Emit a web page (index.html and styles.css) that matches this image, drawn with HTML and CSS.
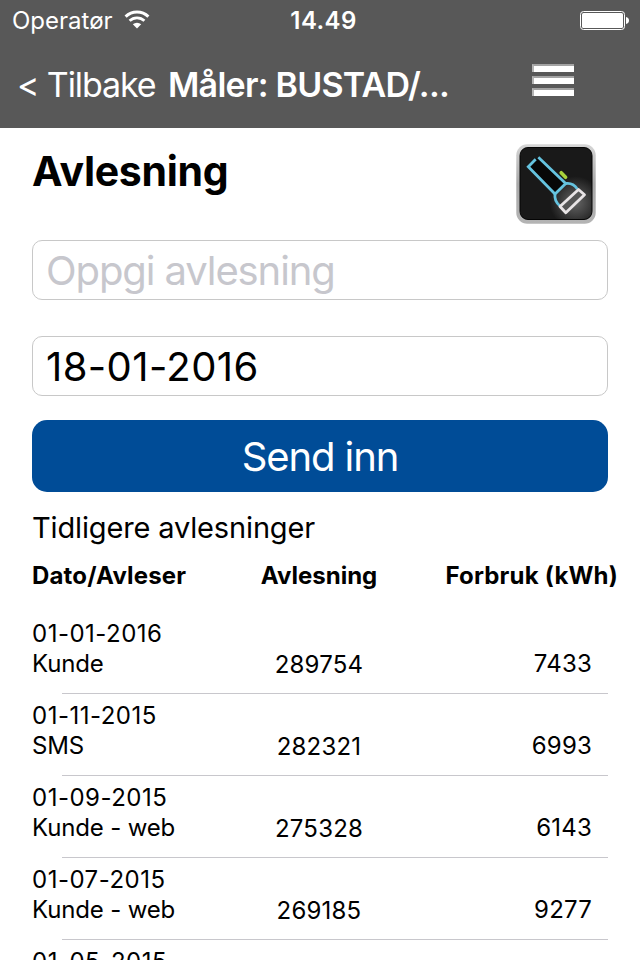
FILE: index.html
```html
<!DOCTYPE html>
<html lang="no">
<head>
	<meta charset="utf-8">
	<title>Avlesning</title>
	<link rel="stylesheet" href="styles.css">
</head>
<body>
<header class="header">
	<div class="status">
		<div class="carrier">
			<span>Operatør</span>
			<svg width="26" height="20" viewBox="0 0 26 20">
				<path d="M1.6 6.6 A16.3 16.3 0 0 1 24.4 6.6" fill="none" stroke="#fff" stroke-width="3"/>
				<path d="M5.6 10.8 A10.7 10.7 0 0 1 20.4 10.8" fill="none" stroke="#fff" stroke-width="2.8"/>
				<path d="M8.8 14.3 A6.2 6.2 0 0 1 17.2 14.3 L13 18.6 Z" fill="#fff"/>
			</svg>
		</div>
		<span class="clock">14.49</span>
		<svg class="battery" width="49" height="20" viewBox="0 0 49 20">
			<rect x="0.5" y="1.5" width="44" height="18" rx="3" fill="none" stroke="#fff"/>
			<rect x="2" y="3" width="41" height="15" rx="1.5" fill="#fff"/>
			<path d="M46 7 Q49 7.6 49 10.5 Q49 13.4 46 14 Z" fill="#fff"/>
		</svg>
	</div>
	<nav class="nav">
		<a class="back">&lt; Tilbake</a>
		<h1 class="nav-title">Måler: BUSTAD/...</h1>
		<div class="menu">
			<span></span>
			<span></span>
			<span></span>
		</div>
	</nav>
</header>

<main class="content">
	<div class="heading">
		<h2>Avlesning</h2>
		<svg class="torch" width="80" height="80" viewBox="0 0 80 80">
			<defs>
				<linearGradient id="rim" x1="0" y1="0" x2="0" y2="1">
					<stop offset="0" stop-color="#d6d6d6"/>
					<stop offset="0.5" stop-color="#a8a8a8"/>
					<stop offset="1" stop-color="#b4b4b4"/>
				</linearGradient>
				<radialGradient id="glow" cx="0.77" cy="0.76" r="0.36">
					<stop offset="0" stop-color="#666"/>
					<stop offset="1" stop-color="#191919"/>
				</radialGradient>
			</defs>
			<rect x="0.3" y="0.3" width="79.4" height="79.4" rx="11" fill="url(#rim)"/>
			<rect x="4" y="3.5" width="72" height="72" rx="8" fill="url(#glow)" stroke="#050505"/>
			<path d="M22.3 13.3 L49.7 39.5 L39 50 L12.3 22.7 L19.7 15.3" fill="#070707" stroke="#65c3df" stroke-width="2.8"/>
			<path d="M49.7 39.5 Q57 38.5 61.3 45 M39 50 Q38 57 44 62" fill="none" stroke="#65c3df" stroke-width="2.8"/>
			<path d="M62.5 45.5 L68.5 50.8 L49.8 68.8 L44 62.5 Z" fill="#555" stroke="#e8e4e6" stroke-width="2.8" stroke-linejoin="round"/>
			<path d="M45.2 28.7 L49.6 33.3" stroke="#a9d23c" stroke-width="3.6" stroke-linecap="round"/>
		</svg>
	</div>

	<form class="form">
		<input type="text" placeholder="Oppgi avlesning">
		<input type="text" class="date" value="18-01-2016">
		<button type="button">Send inn</button>
	</form>

	<h3>Tidligere avlesninger</h3>

	<div class="row row-head">
		<span>Dato/Avleser</span>
		<span class="reading">Avlesning</span>
		<span class="usage">Forbruk (kWh)</span>
	</div>
	<div class="row">
		<div><p class="day">01-01-2016</p><p>Kunde</p></div>
		<span class="reading">289754</span>
		<span class="usage">7433</span>
	</div>
	<div class="row">
		<div><p class="day">01-11-2015</p><p>SMS</p></div>
		<span class="reading">282321</span>
		<span class="usage">6993</span>
	</div>
	<div class="row">
		<div><p class="day">01-09-2015</p><p>Kunde - web</p></div>
		<span class="reading">275328</span>
		<span class="usage">6143</span>
	</div>
	<div class="row">
		<div><p class="day">01-07-2015</p><p>Kunde - web</p></div>
		<span class="reading">269185</span>
		<span class="usage">9277</span>
	</div>
	<div class="row row-last">
		<p class="day">01-05-2015</p>
	</div>
</main>
</body>
</html>
```
FILE: styles.css
```css
* {
	margin: 0;
	padding: 0;
	box-sizing: border-box;
}

body {
	height: 960px;
	overflow: hidden;
	background-color: #fff;
	color: #000;
	font-family: Inter, "Liberation Sans", sans-serif;
}

svg {
	display: block;
}

.header {
	height: 128px;
	background-color: #585858;
	color: #fff;
}

.status {
	display: grid;
	grid-template-columns: 1fr auto 1fr;
	align-items: center;
	height: 40px;
	padding: 0 11px 0 12px;
	font-size: 24px;
}

.carrier {
	display: flex;
	align-items: center;
	gap: 11px;
}

.clock {
	font-weight: 600;
	letter-spacing: 0.4px;
	margin-left: 6px;
}

.battery {
	justify-self: end;
}

.nav {
	display: flex;
	align-items: center;
	height: 88px;
	padding-left: 17px;
}

.back {
	width: 151px;
	font-size: 34px;
	letter-spacing: -1.1px;
	white-space: nowrap;
}

.nav-title {
	width: 364px;
	font-size: 34px;
	font-weight: 600;
	letter-spacing: -0.75px;
	white-space: nowrap;
}

.menu {
	display: flex;
	flex-direction: column;
	gap: 4px;
	width: 42px;
	margin-bottom: 8px;
}

.menu span {
	height: 8px;
	background-color: #fff;
	border-top: 2px solid #a3a3a3;
	border-left: 2px solid #b5b5b5;
}

.content {
	height: 832px;
	padding: 0 32px;
	overflow: hidden;
}

.heading {
	display: flex;
	justify-content: space-between;
	height: 112px;
	padding: 16px 12px 0 0;
}

.heading h2 {
	font-size: 41px;
	line-height: 54px;
	letter-spacing: -0.3px;
}

.form {
	display: flex;
	flex-direction: column;
}

.form input {
	height: 60px;
	padding: 0 13px;
	border: 1px solid #c8c8c8;
	border-radius: 10px;
	background-color: #fff;
	color: #000;
	font-family: inherit;
	font-size: 40px;
	letter-spacing: -1.1px;
}

.form input::placeholder {
	color: #c7c7cd;
}

.form .date {
	margin: 36px 0 24px;
	letter-spacing: 0.4px;
}

.form button {
	height: 72px;
	border: none;
	border-radius: 15px;
	background-color: #004c97;
	color: #fff;
	font-family: inherit;
	font-size: 40px;
	letter-spacing: -1.1px;
}

h3 {
	margin-top: 18px;
	font-size: 29px;
	font-weight: 400;
	line-height: 36px;
	letter-spacing: -0.15px;
}

.row {
	display: grid;
	grid-template-columns: 200px 174px 186px;
	align-items: end;
	height: 82px;
	padding-bottom: 15px;
	font-size: 24px;
	line-height: 30px;
	letter-spacing: -0.15px;
	white-space: nowrap;
	background: linear-gradient(#c8c7cc, #c8c7cc) 30px 100% / 546px 1px no-repeat;
}

.row .day {
	letter-spacing: 0.5px;
}

.row .reading {
	text-align: center;
	line-height: 28px;
	letter-spacing: 0.2px;
}

.row .usage {
	text-align: right;
	letter-spacing: 0.2px;
}

.row-head {
	height: 66px;
	padding-bottom: 21px;
	background: none;
	font-weight: 700;
	letter-spacing: 0.15px;
}

.row-head .reading {
	line-height: 30px;
	letter-spacing: 0;
}

.row-head .usage {
	margin-right: -26px;
}

.row-last {
	align-items: start;
	padding-top: 7px;
}
```
